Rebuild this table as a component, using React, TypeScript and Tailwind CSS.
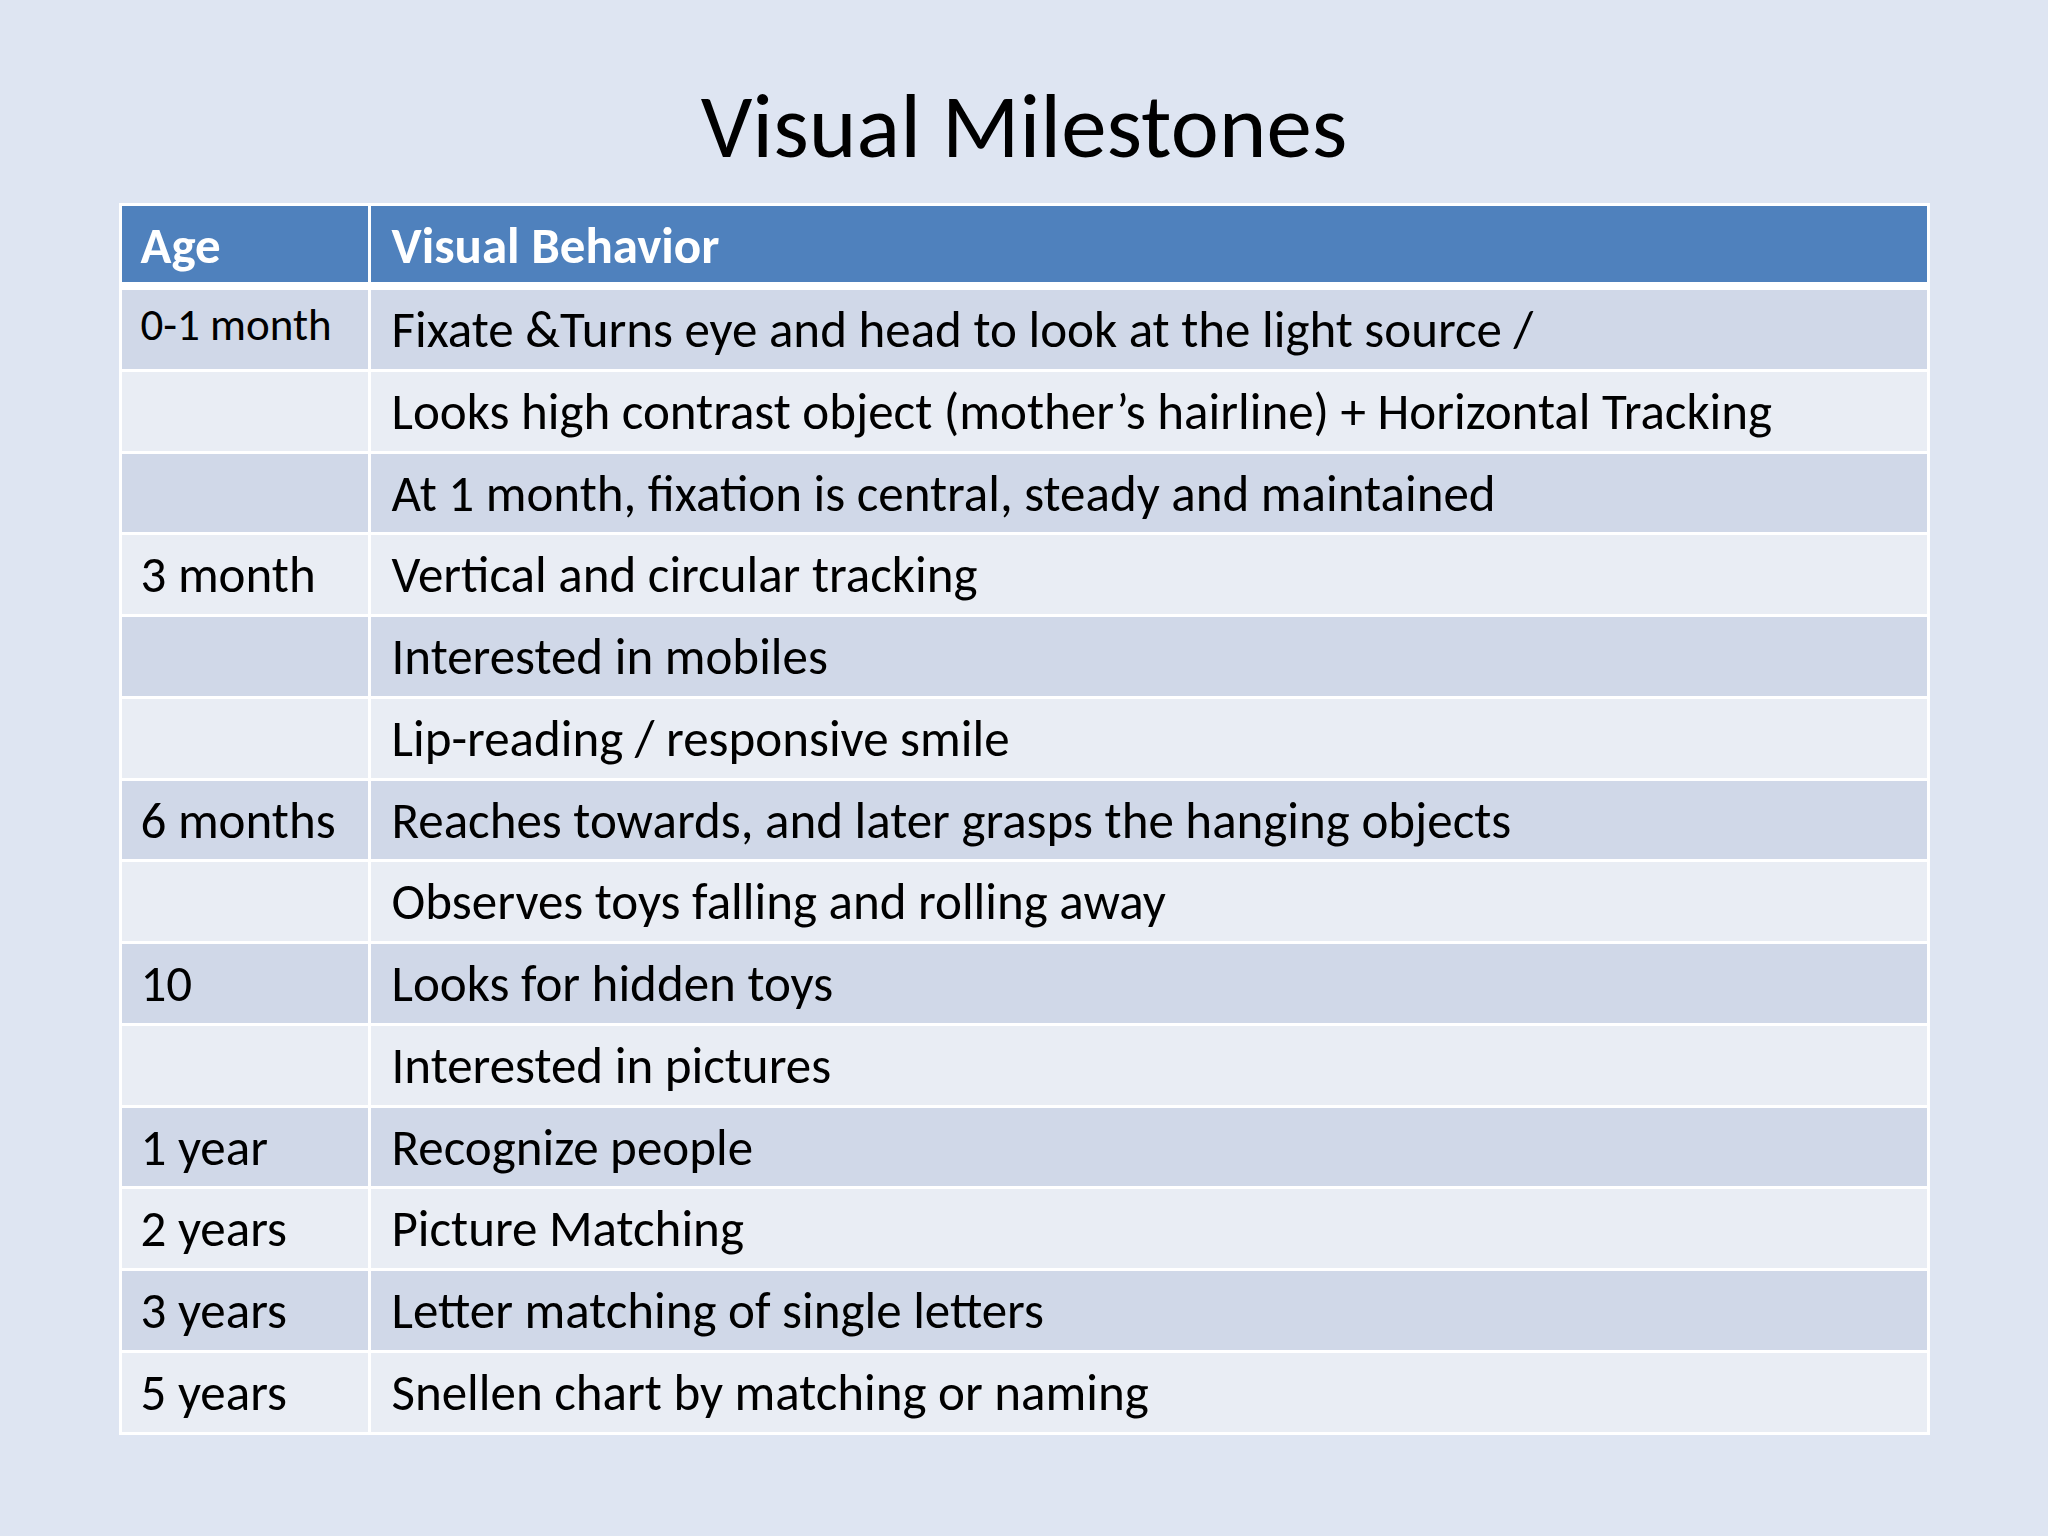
const rows: { age: string; text: string; small?: boolean }[] = [
  { age: "0-1 month", text: "Fixate &Turns eye and head to look at the light source /", small: true },
  { age: "", text: "Looks high contrast object (mother’s hairline) + Horizontal Tracking" },
  { age: "", text: "At 1 month, fixation is central, steady and maintained" },
  { age: "3 month", text: "Vertical and circular tracking" },
  { age: "", text: "Interested in mobiles" },
  { age: "", text: "Lip-reading / responsive smile" },
  { age: "6 months", text: "Reaches towards, and later grasps the hanging objects" },
  { age: "", text: "Observes toys falling and rolling away" },
  { age: "10", text: "Looks for hidden toys" },
  { age: "", text: "Interested in pictures" },
  { age: "1 year", text: "Recognize people" },
  { age: "2 years", text: "Picture Matching" },
  { age: "3 years", text: "Letter matching of single letters" },
  { age: "5 years", text: "Snellen chart by matching or naming" },
]

export default function App() {
  return (
    <div
      className="w-[2048px] h-[1536px] bg-[#dee5f2] text-black flex flex-col items-center"
      style={{ fontFamily: "Carlito, Lato, 'Noto Sans', sans-serif" }}
    >
      <h1 className="mt-[72px] h-[131px] text-[91px] leading-[108px] font-normal">Visual Milestones</h1>

      <div className="w-[1811px] bg-white p-[3px] flex flex-col">
        <div className="grid grid-cols-[246px_1fr] gap-x-[3px] h-[76px] bg-white text-white font-bold text-[51px] leading-[61px]">
          <div className="bg-[#4f81bd] pl-[19px] pt-[9px]">Age</div>
          <div className="bg-[#4f81bd] pl-[21px] pt-[9px]">Visual Behavior</div>
        </div>
        <div className="flex flex-col gap-y-[3px] mt-[8px]">
          {rows.map((r, i) => {
            const bg = i % 2 === 0 ? "bg-[#d0d8e8]" : "bg-[#e9edf4]"
            return (
              <div key={i} className="grid grid-cols-[246px_1fr] gap-x-[3px] h-[78.75px] text-[51px] leading-[61px]">
                <div className={`${bg} pl-[19px] ${r.small ? "pt-[4px] text-[45px]" : "pt-[9px]"}`}>{r.age}</div>
                <div className={`${bg} pl-[21px] pt-[9px] whitespace-nowrap`}>{r.text}</div>
              </div>
            )
          })}
        </div>
      </div>
    </div>
  )
}
